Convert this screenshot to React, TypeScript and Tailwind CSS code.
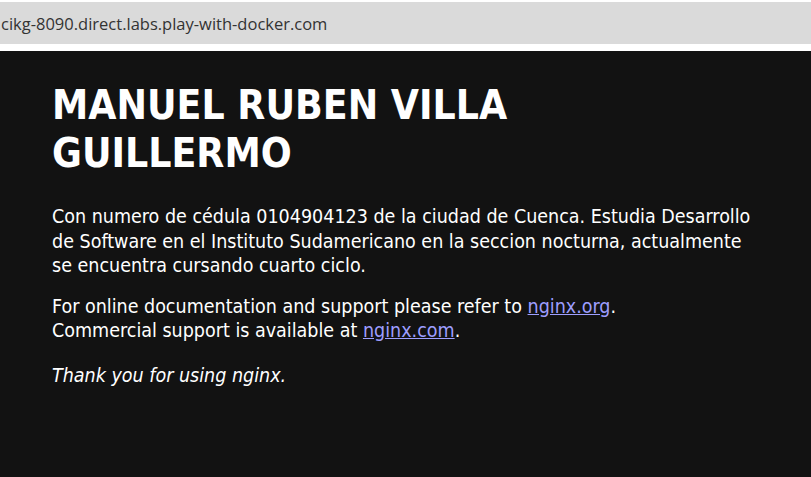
export default function App() {
  return (
    <div className="w-[811px] h-[477px] overflow-hidden bg-white flex flex-col">
      <div className="mt-[2px] h-[42px] bg-[#dadada] flex items-center pl-[1px] pt-[2px] font-['Open_Sans','Noto_Sans',sans-serif] text-[16.5px] text-[#333]">
        cikg-8090.direct.labs.play-with-docker.com
      </div>
      <div className="h-[7px] bg-white" />
      <main className="flex-1 bg-[#121212] text-white font-['DejaVu_Sans_Condensed','DejaVu_Sans',sans-serif] px-[52px] pt-[30px] whitespace-nowrap">
        <h1 className="text-[40.5px] leading-[48px] font-bold">
          MANUEL RUBEN VILLA
          <br />
          GUILLERMO
        </h1>
        <p className="mt-[28px] text-[19.5px] leading-[24.5px]">
          Con numero de cédula 0104904123 de la ciudad de Cuenca. Estudia Desarrollo
          <br />
          de Software en el Instituto Sudamericano en la seccion nocturna, actualmente
          <br />
          se encuentra cursando cuarto ciclo.
        </p>
        <p className="mt-[16px] text-[19.5px] leading-[24.5px]">
          For online documentation and support please refer to{' '}
          <a href="#" className="text-[#9e9eff] underline">nginx.org</a>.
          <br />
          Commercial support is available at{' '}
          <a href="#" className="text-[#9e9eff] underline">nginx.com</a>.
        </p>
        <p className="mt-[20px] text-[19.5px] leading-[24.5px] italic">Thank you for using nginx.</p>
      </main>
    </div>
  );
}
